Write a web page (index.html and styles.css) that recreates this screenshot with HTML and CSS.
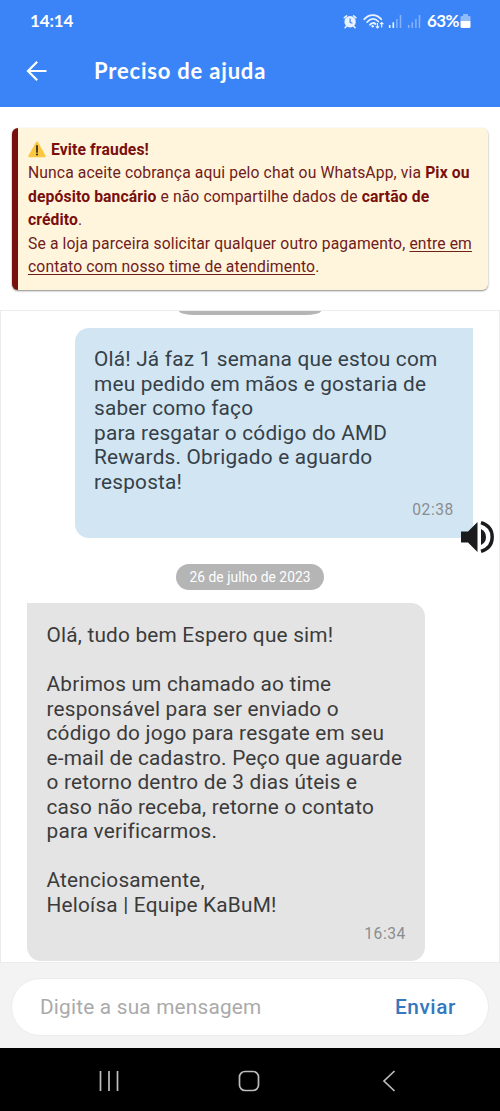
FILE: index.html
```html
<!DOCTYPE html>
<html lang="pt-BR">
<head>
<meta charset="utf-8">
<title>Preciso de ajuda</title>
<link rel="stylesheet" href="styles.css">
</head>
<body>
<div class="screen">
  <header class="header">
    <div class="status">
      <span class="clock">14:14</span>
      <div class="indicators">
        <svg class="signals" width="84" height="20" viewBox="0 0 84 20">
          <circle cx="7.1" cy="10.8" r="5.700" fill="#e9f3ff"/>
          <path d="M1.200 6.800l2.400-2M10.600 4.800l2.400 2M3.400 15.200l-1.300 1.500M10.800 15.200l1.300 1.500" fill="none" stroke="#e9f3ff" stroke-width="1.500" stroke-linecap="round"/>
          <path d="M7.100 7.500v3.800l2.300.9" fill="none" stroke="#3b84f7" stroke-width="1.200"/>
          <path d="M21.300 8.200C26 2.700 33.500 2.700 38.200 8.200M24.200 11C27.500 7 32 7 35.300 10.500M27 13.700C28.700 11.600 31 11.600 32.500 13" fill="none" stroke="#e9f3ff" stroke-width="1.800" stroke-linecap="round"/>
          <circle cx="29.700" cy="15.300" r="1.200" fill="#e9f3ff"/>
          <path d="M34.500 12v5m-1.700-1.700 1.700 1.700 1.700-1.700M38.700 16.500v-5m-1.700 1.700 1.700-1.700 1.700 1.700" fill="none" stroke="#e9f3ff" stroke-width="1.200"/>
          <path d="M46.700 14v3M50.300 11.300v5.700" stroke="#e9f3ff" stroke-width="1.600"/>
          <path d="M53.900 8v9M57.500 4v13M65.700 14v3M69.300 11.300v5.700M72.900 8v9M76.500 4v13" stroke="#86b3fb" stroke-width="1.500"/>
        </svg>
        <span class="percent">63%</span>
        <svg class="battery" width="11" height="16" viewBox="0 0 11 16">
          <path d="M3 1h5v2h1.500q1 0 1 1v4H.5V4q0-1 1-1H3z" fill="#91baf9"/>
          <path d="M.5 8h10v5.500q0 1.500-1.500 1.500H2Q.5 15 .5 13.500z" fill="#fff"/>
        </svg>
      </div>
    </div>
    <div class="appbar">
      <svg width="22" height="22" viewBox="0 0 22 22"><path d="M20.500 11H2M11.200 1.800 2 11l9.200 9.200" fill="none" stroke="#fff" stroke-width="2.200"/></svg>
      <h1 class="title">Preciso de ajuda</h1>
    </div>
  </header>

  <section class="alert">
    <div class="alert-head">
      <svg width="18" height="17" viewBox="0 0 18 17"><path d="M7.800 1.400q1.200-1.800 2.400 0l7.300 13q.9 1.700-1 1.900h-15q-1.900-.2-1-1.900z" fill="#fac740"/><path d="M9 5v6" stroke="#3f2d23" stroke-width="1.800" stroke-linecap="round"/><circle cx="9" cy="13.500" r="1.100" fill="#3f2d23"/></svg>
      <b>Evite fraudes!</b>
    </div>
    <p>Nunca aceite cobrança aqui pelo chat ou WhatsApp, via <b>Pix ou<br>depósito bancário</b> e não compartilhe dados de <b>cartão de<br>crédito</b>.</p>
    <p>Se a loja parceira solicitar qualquer outro pagamento, <span class="link">entre em<br>contato com nosso time de atendimento</span>.</p>
  </section>

  <main class="chat">
    <div class="date-edge"></div>
    <article class="bubble sent">
      <p>Olá! Já faz 1 semana que estou com<br>meu pedido em mãos e gostaria de<br>saber como faço<br>para resgatar o código do AMD<br>Rewards. Obrigado e aguardo<br>resposta!</p>
      <time>02:38</time>
      <svg class="speaker" width="34" height="34" viewBox="0 0 34 34"><path d="M0 11.500h7L16.500 2v30L7 22.500H0z" fill="#1b1b1e"/><path d="M20 9q5 2.500 5 8T20 25z" fill="#1b1b1e"/><path d="M20 2.600Q31.200 6 31.200 17T20 31.400" fill="none" stroke="#1b1b1e" stroke-width="3.400"/></svg>
    </article>
    <div class="date">26 de julho de 2023</div>
    <article class="bubble received">
      <p>Olá, tudo bem Espero que sim!<br><br>Abrimos um chamado ao time<br>responsável para ser enviado o<br>código do jogo para resgate em seu<br>e-mail de cadastro. Peço que aguarde<br>o retorno dentro de 3 dias úteis e<br>caso não receba, retorne o contato<br>para verificarmos.<br><br>Atenciosamente,<br>Heloísa | Equipe KaBuM!</p>
      <time>16:34</time>
    </article>
  </main>

  <footer class="composer">
    <div class="field"><span class="placeholder">Digite a sua mensagem</span><span class="send">Enviar</span></div>
  </footer>
  <nav class="navbar">
    <svg width="20" height="22" viewBox="0 0 20 22"><path d="M1.500 1v20M10 1v20M18.500 1v20" stroke="#bdbdbd" stroke-width="1.700"/></svg>
    <svg class="home" width="22" height="22" viewBox="0 0 22 22"><rect x="1.500" y="1.500" width="19" height="19" rx="5.500" fill="none" stroke="#bdbdbd" stroke-width="1.700"/></svg>
    <svg width="14" height="22" viewBox="0 0 14 22"><path d="M12.500 1 2 11l10.500 10" fill="none" stroke="#bdbdbd" stroke-width="1.700"/></svg>
  </nav>
</div>
</body>
</html>
```
FILE: styles.css
```css
* { box-sizing: border-box; }
body { margin: 0; font-family: Roboto, sans-serif; background: #fff; }
p, h1 { margin: 0; }
svg { display: block; flex: none; }
.screen { width: 500px; height: 1111px; display: flex; flex-direction: column; overflow: hidden; }
.header { height: 107px; background: #3b84f7; color: #fff; flex: none; }
.status { height: 41px; padding: 0 29px 0 30px; display: flex; align-items: center; justify-content: space-between; }
.clock { font: 700 17px/20px Lato, sans-serif; letter-spacing: -.1px; }
.indicators { display: flex; align-items: center; }
.percent { font: 700 17px/20px Lato, sans-serif; letter-spacing: -.6px; width: 32px; }
.battery { margin-left: 1px; }
.appbar { height: 60px; padding-left: 26px; display: flex; align-items: center; gap: 46px; }
.title { font: 700 22px/28px Lato, sans-serif; letter-spacing: .8px; }
.alert { flex: none; height: 162px; margin: 21px 12px 0; padding: 10px 0 0 10px; border-left: 6px solid #78110e; border-radius: 6px; background: #fff5dc; box-shadow: 0 1px 2px #8b8b83; color: #70201b; font-size: 15.700px; line-height: 23.450px; letter-spacing: .12px; white-space: nowrap; }
.alert-head { display: flex; align-items: center; gap: 5px; height: 23.450px; }
.alert b { color: #780f0d; }
.link { text-decoration: underline; text-underline-offset: 2px; }
.chat { margin-top: 20px; height: 653px; flex: none; border: 1px solid #ececec; padding: 0 26px; display: flex; flex-direction: column; }
.date-edge { width: 142px; height: 4px; align-self: center; background: #b5b5b5; border-radius: 0 0 16px 16px / 0 0 4px 4px; }
.bubble { width: 398px; padding: 20px 20px 20px 19.500px; font-size: 20.800px; line-height: 24.550px; letter-spacing: .2px; color: #3b3b3b; display: flex; flex-direction: column; white-space: nowrap; flex: none; }
.bubble time { align-self: flex-end; font-size: 15.600px; line-height: 20px; letter-spacing: .6px; color: #8a8d90; margin: 6px -1px 0 0; }
.sent { position: relative; margin-top: 13px; height: 210px; padding-top: 19px; padding-left: 19px; align-self: flex-end; background: #d2e5f3; color: #354047; border-radius: 14px 0 14px 14px; }
.speaker { position: absolute; right: -22px; top: 192px; }
.date { margin: 26px 0 13px; align-self: center; width: 148px; height: 26px; border-radius: 13px; background: #b5b5b5; color: #fff; font-size: 13.800px; line-height: 26px; letter-spacing: .05px; text-align: center; }
.received { height: 358px; background: #e4e4e4; border-radius: 0 14px 14px 14px; }
.composer { height: 85px; flex: none; background: #f3f3f3; padding: 15px 11px 0; }
.field { height: 58px; border: 1px solid #ececec; border-radius: 29px; background: #fff; display: flex; align-items: center; justify-content: space-between; padding: 0 32px 0 28px; font-size: 20.800px; letter-spacing: .2px; }
.placeholder { color: #aaa; }
.send { color: #3578bd; font-weight: 500; letter-spacing: .6px; }
.navbar { height: 63px; flex: none; background: #000; display: flex; align-items: center; padding: 2px 104px 0 99px; justify-content: space-between; }
.home { margin-right: 4px; }
```
